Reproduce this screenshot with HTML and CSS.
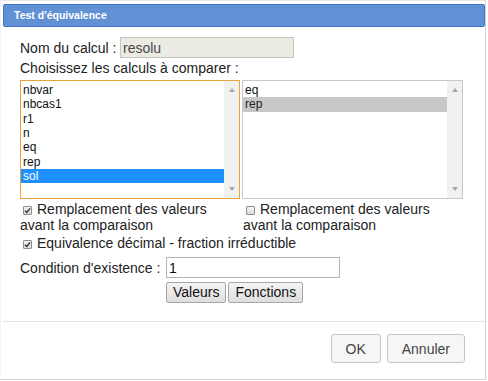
FILE: index.html
```html
<!DOCTYPE html>
<html lang="fr">
<head>
<meta charset="utf-8">
<title>Test d'équivalence</title>
<link rel="stylesheet" href="styles.css">
</head>
<body>
<div class="dialog">
  <div class="titlebar">Test d'équivalence</div>
  <div class="content">
    <div class="name-row">
      <span class="label">Nom du calcul :</span>
      <input class="field readonly" type="text" value="resolu" readonly>
    </div>
    <div class="prompt">Choisissez les calculs à comparer :</div>
    <div class="lists">
      <div class="listbox focused">
        <ul class="options">
          <li>nbvar</li>
          <li>nbcas1</li>
          <li>r1</li>
          <li>n</li>
          <li>eq</li>
          <li>rep</li>
          <li class="selected">sol</li>
        </ul>
        <div class="scrollbar"><span class="arrow up"></span><span class="arrow down"></span></div>
      </div>
      <div class="listbox right">
        <ul class="options">
          <li>eq</li>
          <li class="selected inactive">rep</li>
        </ul>
        <div class="scrollbar"><span class="arrow up"></span><span class="arrow down"></span></div>
      </div>
    </div>
    <div class="checks">
      <div class="check-group"><span class="checkbox checked"><svg viewBox="0 0 10 10" width="10" height="10"><path d="M2.3 5.2 L4.2 7.2 L7.8 2.6" fill="none" stroke="#333" stroke-width="1.6"/></svg></span>Remplacement des valeurs avant la comparaison</div>
      <div class="check-group right"><span class="checkbox"></span>Remplacement des valeurs avant la comparaison</div>
    </div>
    <div class="check-line"><span class="checkbox checked"><svg viewBox="0 0 10 10" width="10" height="10"><path d="M2.3 5.2 L4.2 7.2 L7.8 2.6" fill="none" stroke="#333" stroke-width="1.6"/></svg></span>Equivalence décimal - fraction irréductible</div>
    <div class="condition">
      <span class="label">Condition d'existence :</span>
      <input class="field" type="text" value="1">
      <div class="tool-buttons">
        <button class="btn">Valeurs</button>
        <button class="btn">Fonctions</button>
      </div>
    </div>
  </div>
  <div class="buttonpane">
    <button class="dbtn">OK</button>
    <button class="dbtn">Annuler</button>
  </div>
</div>
</body>
</html>
```

FILE: styles.css
```css
html, body {
  margin: 0;
  padding: 0;
  background: #ffffff;
}

body {
  font-family: "Liberation Sans", Arial, sans-serif;
  font-size: 14px;
  color: #222222;
}

.dialog {
  box-sizing: border-box;
  width: 486px;
  height: 380px;
  border: 1px solid #d3d3d3;
  border-top-color: #e8e8e8;
  border-left-color: #f4f4f4;
  padding: 3px 0 3px 2px;
  display: flex;
  flex-direction: column;
}

.titlebar {
  box-sizing: border-box;
  height: 23px;
  background: #6190d5;
  border: 1px solid #3e76cc;
  border-radius: 2px;
  color: #ffffff;
  font-weight: bold;
  font-size: 10.5px;
  line-height: 21px;
  padding-left: 10px;
}

.content {
  padding: 10px 0 18px 17px;
  display: flex;
  flex-direction: column;
}

.name-row {
  display: flex;
  align-items: center;
  height: 21px;
}

.label {
  white-space: pre;
}

.name-row .label {
  width: 100px;
}

.field {
  box-sizing: border-box;
  height: 21px;
  width: 174px;
  margin: 0;
  border: 1px solid #b5b5b5;
  padding: 0 2px;
  font-family: "Liberation Sans", Arial, sans-serif;
  font-size: 14px;
  color: #111111;
  background: #ffffff;
  outline: none;
}

.field.readonly {
  background: #ebebe4;
  color: #4a4a4a;
  border-color: #c4c4bd;
}

.prompt {
  margin-top: 2px;
  line-height: 16px;
}

.lists {
  margin-top: 4px;
  display: flex;
  gap: 2px;
}

.listbox {
  box-sizing: border-box;
  width: 220px;
  height: 119px;
  border: 1px solid #c8c8c8;
  display: flex;
  background: #ffffff;
}

.listbox.right {
  width: 221px;
}

.listbox.focused {
  border-color: #e8a33a;
}

.options {
  list-style: none;
  margin: 0;
  padding: 2px 0 0 0;
  flex: 1;
  font-size: 12px;
  color: #111111;
}

.options li {
  height: 14.33px;
  line-height: 14.33px;
  padding-left: 2px;
}

.options li.selected {
  background: #1e90ff;
  color: #ffffff;
}

.options li.selected.inactive {
  background: #c8c8c8;
  color: #222222;
}

.scrollbar {
  width: 15px;
  background: #f1f1f1;
  display: flex;
  flex-direction: column;
  justify-content: space-between;
  align-items: center;
  padding: 7px 0 7px 0;
}

.arrow {
  width: 0;
  height: 0;
  border-left: 3.5px solid transparent;
  border-right: 3.5px solid transparent;
}

.arrow.up {
  border-bottom: 4px solid #a8a8a8;
}

.arrow.down {
  border-top: 4px solid #a8a8a8;
}

.checks {
  margin-top: 2px;
  display: flex;
  gap: 3px;
  line-height: 16px;
}

.check-group {
  width: 220px;
}

.checkbox {
  box-sizing: border-box;
  display: inline-block;
  width: 9px;
  height: 9px;
  margin: 0 5px 0 3px;
  border: 1px solid #8e8e8e;
  border-radius: 1px;
  background: linear-gradient(#f6f6f6, #d9d9d9);
  vertical-align: -1px;
  position: relative;
}

.checkbox svg {
  position: absolute;
  left: -1px;
  top: -1px;
  width: 9px;
  height: 9px;
}

.check-line {
  margin-top: 2px;
  line-height: 16px;
}

.condition {
  margin-top: 6px;
  display: grid;
  grid-template-columns: 146px auto;
  row-gap: 4px;
  align-items: center;
}

.tool-buttons {
  grid-column: 2;
  display: flex;
  gap: 2px;
}

.btn {
  box-sizing: border-box;
  height: 21px;
  margin: 0;
  padding: 0 6px;
  border: 1px solid #a7a7a7;
  border-radius: 2px;
  background: linear-gradient(#f4f4f4, #dedede);
  font-family: "Liberation Sans", Arial, sans-serif;
  font-size: 14px;
  color: #111111;
  line-height: 19px;
}

.buttonpane {
  border-top: 1px solid #e4e4e4;
  padding: 12px 20px 13px 0;
  display: flex;
  justify-content: flex-end;
  gap: 6px;
}

.dbtn {
  box-sizing: border-box;
  height: 29px;
  margin: 0;
  padding: 0 14px;
  border: 1px solid #c5c5c5;
  border-radius: 3px;
  background: #f6f6f6;
  font-family: "Liberation Sans", Arial, sans-serif;
  font-size: 14px;
  color: #454545;
}
```
